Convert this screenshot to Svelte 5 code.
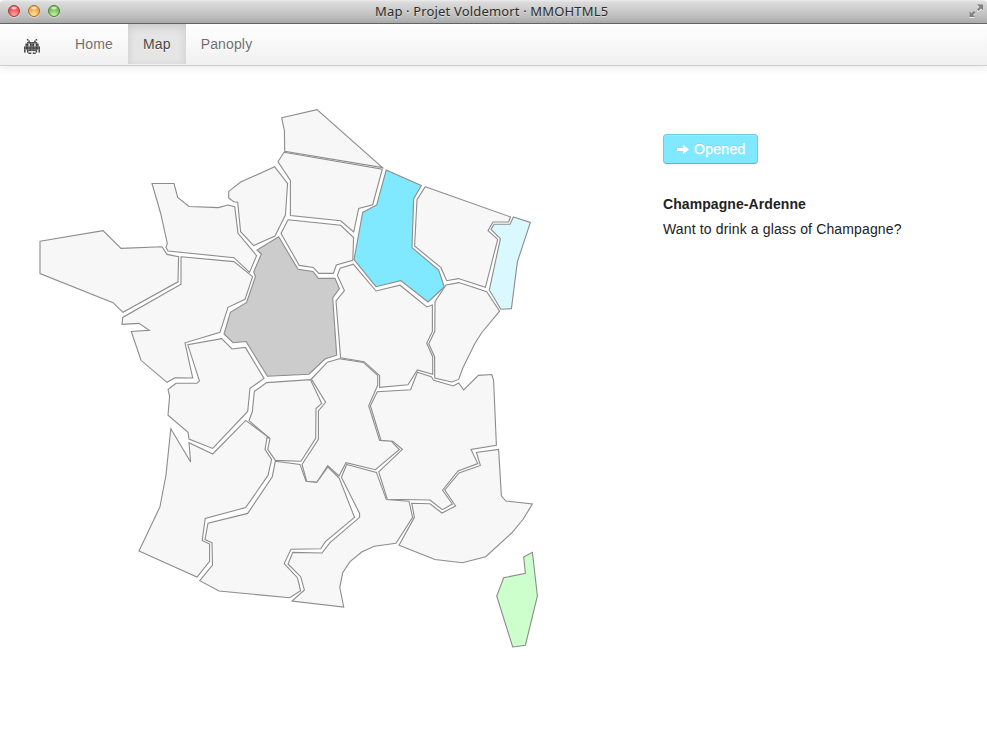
<script>
  const links = ['Home', 'Map', 'Panoply'];
  let active = $state('Map');

  const regions = [
    { name: 'Bretagne', points: '40,241.3 103,230.6 121,248.4 162,246.8 167,254.4 178.6,256.6 178,281.8 123,312.3 113,302.7 40,273.6' },
    { name: 'Basse-Normandie', points: '152,183.5 174,183.5 177.7,197.4 189,206.5 218.3,207.6 228,205 234.7,206.8 238,233.3 256.6,255.7 249.5,272.4 234,257.7 168,251 166,247.5 167.3,243.5 160.7,213.5' },
    { name: 'Pays de la Loire', points: '181,256.8 234,261.6 252.6,276.6 245,299.3 228,307.3 220,332.4 185,342.8 192.7,378 175,377.7 167,382.3 141,360.3 131.3,331.4 149.3,330.3 139,323.4 122,324.4 122.7,317.4 181,284.3' },
    { name: 'Haute-Normandie', points: '274.7,166.8 287.6,183.3 285.4,215 275,236 253.7,245.6 240.6,231.7 237.7,202.2 233.7,201.7 228.7,198 228.7,191.4 240.7,182' },
    { name: 'Nord-Pas-de-Calais', points: '281.7,117.7 317,109.6 382.5,167.6 284.7,151.3 284.4,130.7' },
    { name: 'Picardie', points: '284,152.3 382.3,169.2 372.7,204.7 358.7,208.4 353.7,232 340.7,220.8 290.4,215.6 290.4,180.4 278,161.7' },
    { name: 'Île-de-France', points: '288,219.8 340.7,225.3 353.6,237.6 352.8,260.4 336.4,265 333.3,273.4 318.7,273.4 313.3,267.4 299.3,265.4 281,233.4' },
    { name: 'Champagne-Ardenne', fill: '#80e9ff', points: '386.2,170 421.3,185.4 413.7,198.7 412,247.6 438.7,270 444.3,287 428,302 400.7,280.6 376,286.7 354,259.7 362.7,212.4 376.7,205' },
    { name: 'Lorraine', points: '425.3,186.7 510.6,217 508.6,222 493,222 488,230.7 497.7,239.4 485.4,287.3 458.3,278.6 446.7,280.7 441,267.7 414.6,246 417,199.7' },
    { name: 'Alsace', fill: '#d9f8ff', points: '513.4,217 530.4,222.4 517.4,261.7 511.4,308.7 500.8,309.3 489.3,290 500.4,238.6 491,229.4 494,224.2 510,224.3' },
    { name: 'Centre', fill: '#ccc', points: '278.7,236.7 298,269.3 313,271.4 318.3,278.4 335,278.4 339.4,288.6 332.7,298 336.7,355.2 325,359 309,374.2 267.4,376.3 246,341.5 233,342.7 224,334 230.4,312.4 246.6,302.4 255.4,276.7 253.7,271.7 261.4,254 257,250' },
    { name: 'Bourgogne', points: '353.3,264.2 376,291 400,285.2 426.8,307 432.4,305 432.4,331.4 426.7,343.3 432.7,356.7 432.7,374.2 417.4,370 408,384.7 379.6,387.3 379.6,375.4 364,361.7 340.6,357.7 336,301 344.4,290.6 337.4,275.4 340.2,268.2' },
    { name: 'Franche-Comté', points: '446,285 459,282.6 486.7,291.7 499.6,311.2 481.7,332.7 475,343.3 462.7,368.3 458.7,379.4 451.7,382 434.7,378 434.6,356.7 428.7,343.7 434.8,331.3 435,301.7' },
    { name: 'Poitou-Charentes', points: '221.7,338.7 232,349 245.4,347.4 264,378.4 250,388.3 247.7,411.4 212.7,448.4 189,439 188,432.4 168,415.2 169.6,396.3 168,389.5 176,383.3 197,383.3 199.4,380.8 187.8,344.8' },
    { name: 'Limousin', points: '266.7,382.6 310.4,379.6 321.7,403.4 316,408.5 315.7,438.4 301,461.2 275.4,460.4 267.7,449.3 270,438.7 249,420.7 252.3,411.8 254.3,391.5' },
    { name: 'Auvergne', points: '311.4,379 327.4,362.2 339.4,358.7 363.3,362.4 377.7,375.3 377.7,385.3 368.7,405.7 379.6,440.4 390.7,440.7 399.4,449.5 375.4,469.7 346,462.7 339,476 327.7,465.6 317,482.3 306.7,481.2 302,464.5 318.4,439.4 318.4,411 325.6,402.3' },
    { name: 'Rhône-Alpes', points: '417.4,372.3 431.3,376.7 433.7,380.2 453.3,386 458.7,383 463.7,390 478.4,375.4 491.7,374.5 493.6,380 496.4,445.3 471,449.4 477.8,463.6 458,471 442.6,490.2 452.4,504 442.4,509.7 430,500 387.3,499.2 378.7,471.8 402.4,449.4 392.7,441.3 381,440.4 370.4,405.7 377.3,391.8 410.6,389.7' },
    { name: "Provence-Alpes-Côte d'Azur", points: '498.6,449.4 501.4,496 506,501 532.4,504 523.3,519 511.7,533 485.7,556.7 462.4,562.8 435,559.5 399,545.3 414.4,517.3 411.7,503.2 430,503.8 442,513 455.6,506 444.8,490 459,473 480.4,465.4 476.4,452.4' },
    { name: 'Corse', fill: '#ccffcc', points: '523.7,557 532.4,552.3 537.4,596 525.4,645.2 512.7,647 496.7,596 503.7,577.8 525.4,573.3' },
    { name: 'Languedoc-Roussillon', points: '346.7,464.5 376.4,472.4 386.3,499.6 409,501.2 412.6,517.3 396,543.2 374.3,546.2 361.7,552 350,561.7 342.7,572.7 339.8,587.3 343.7,607 292,601 304.4,590 300.7,576.7 288,564 292.8,552.4 322,553 330,542.7 359.6,517.3 359.6,513.5 341.4,477.3' },
    { name: 'Midi-Pyrénées', points: '275.3,461.3 300,464.4 306,481.3 316.7,482.4 327.9,467 339.3,478.4 354.5,517.3 325.4,541.6 320.7,548.8 291,549.2 284.2,563.6 297.4,577.7 300.6,590.8 289.7,597.8 219,591 199.8,580.7 212.5,565 212,542.8 205,539.6 208,523.2 247.7,513.4 272.3,476.7' },
    { name: 'Aquitaine', points: '170.8,428.7 190.6,462 189,442.7 212.7,454 245.7,420.4 269.7,438.2 267,437.8 265,449.3 271.6,459.4 268,475.4 245.7,507.6 205.2,518.4 202.2,540.4 209.6,544 209.6,561.4 197,577 139,551 160,506.7 166,475' }
  ];

  const invader = [
    '..#.....#..',
    '...#...#...',
    '..#######..',
    '.##.###.##.',
    '.##.###.##.',
    '###########',
    '###########',
    '#.#######.#',
    '#.#.....#.#',
    '...##.##...'
  ];
</script>

<div class="window">
  <header class="titlebar">
    <div class="lights"><i class="red"></i><i class="amber"></i><i class="green"></i></div>
    <div class="title">Map · Projet Voldemort · MMOHTML5</div>
    <svg class="expand" width="15" height="15" viewBox="0 0 15 15">
      <g id="arrows" fill="#f0f0f0" transform="translate(0 1)">
        <path d="M8 .5h6V6.500l-2-2-2.500 2.500-1.500-1.500 2.500-2.500z" />
        <path d="M.5 7.500l2 2 2.500-2.500 1.500 1.500-2.500 2.500 2 2h-5.500z" />
      </g>
      <path d="M8 .5h6V6.500l-2-2-2.500 2.500-1.500-1.500 2.500-2.500zM.5 7.500l2 2 2.500-2.500 1.500 1.500-2.500 2.500 2 2h-5.500z" fill="#808080" />
    </svg>
  </header>

  <nav class="navbar">
    <span class="brand">
      <svg width="16" height="15" viewBox="0 0 11 10" preserveAspectRatio="none">
        {#each invader as row, y}
          {#each row as cell, x}
            {#if cell === '#'}<rect {x} {y} width="1.04" height="1.04" fill="#444" />{/if}
          {/each}
        {/each}
      </svg>
    </span>
    {#each links as link}
      <button class="link" class:active={active === link} onclick={() => (active = link)}>{link}</button>
    {/each}
  </nav>

  <main>
    <svg class="map" width="580" height="666" viewBox="0 66 580 666">
      {#each regions as region}
        <polygon points={region.points} fill={region.fill ?? '#f7f7f7'} aria-label={region.name} />
      {/each}
    </svg>
    <section class="info">
      <button class="status">
        <svg width="12" height="11" viewBox="0 0 12 11"><path d="M0 3.900h6V.8L12 5.500 6 10.200V7.100H0z" fill="#fff" /></svg>
        <span>Opened</span>
      </button>
      <h1>Champagne-Ardenne</h1>
      <p>Want to drink a glass of Champagne?</p>
    </section>
  </main>
</div>

<style>
  :global(body) { background: #fff; }
  .window {
    width: 987px;
    height: 732px;
    overflow: hidden;
    font: 14px/20px "Liberation Sans", Arial, sans-serif;
    color: #222;
    display: flex;
    flex-direction: column;
  }
  .titlebar {
    box-sizing: border-box;
    height: 24px;
    flex: none;
    display: flex;
    align-items: center;
    justify-content: space-between;
    padding: 0 3px 1px 8px;
    border-bottom: 1px solid #686868;
    border-radius: 4px 4px 0 0;
    background: linear-gradient(#eee, #dcdcdc 2px, #b0b0b0);
  }
  .lights { display: flex; gap: 8px; width: 60px; }
  .lights i {
    box-sizing: border-box;
    width: 12px;
    height: 12px;
    border-radius: 50%;
    border: 1px solid;
    box-shadow: 0 1px 0 rgba(255, 255, 255, .5);
  }
  .lights .red { background: radial-gradient(ellipse 4px 2px at 50% 2px, #fff, transparent), radial-gradient(circle at 50% 90%, #ffa6a6, #ec4f53 65%); border-color: #a13c3d; }
  .lights .amber { background: radial-gradient(ellipse 4px 2px at 50% 2px, #fff, transparent), radial-gradient(circle at 50% 90%, #ffe79b, #eea541 65%); border-color: #a46e2c; }
  .lights .green { background: radial-gradient(ellipse 4px 2px at 50% 2px, #fff, transparent), radial-gradient(circle at 50% 90%, #c8f2a4, #73bb59 65%); border-color: #4a7f38; }
  .title {
    font: 13px/20px "Noto Sans", "Open Sans", sans-serif;
    letter-spacing: .16px;
    white-space: nowrap;
    color: #2c2c2c;
    text-shadow: 0 1px 0 rgba(255, 255, 255, .5);
    margin-left: 307px;
    margin-right: auto;
  }
  .navbar {
    box-sizing: border-box;
    height: 42px;
    flex: none;
    display: flex;
    align-items: stretch;
    padding: 0 0 1px 24px;
    background: linear-gradient(#fff, #f0f0f0);
    border-bottom: 1px solid #d0d0d0;
    box-shadow: 0 1px 10px rgba(0, 0, 0, .1);
  }
  .brand { width: 36px; padding-top: 15px; }
  .brand svg { display: block; }
  .link {
    border: 0;
    margin: 0;
    padding: 0 15px;
    background: none;
    font: 14px/20px "Liberation Sans", Arial, sans-serif;
    letter-spacing: .15px;
    color: #707070;
    text-shadow: 0 1px 0 #fff;
  }
  .link.active {
    color: #484848;
    background: #e5e5e5;
    box-shadow: inset 0 3px 8px rgba(0, 0, 0, .125);
  }
  main { display: flex; flex: 1; min-height: 0; }
  .map { display: block; flex: none; }
  .map polygon { stroke: #8c8c8c; stroke-width: 1.1; }
  .info { padding: 68px 0 0 83px; }
  .status {
    box-sizing: border-box;
    width: 95px;
    height: 30px;
    display: flex;
    align-items: center;
    gap: 5px;
    padding: 0 0 0 13px;
    border: 1px solid #66cfe2;
    border-bottom-color: #58b9cc;
    border-radius: 4px;
    background: #80e9ff;
    box-shadow: inset 0 1px 0 rgba(255, 255, 255, .15), 0 1px 2px rgba(0, 0, 0, .05);
    color: #fff;
    font: 14px/20px "Liberation Sans", Arial, sans-serif;
    letter-spacing: .3px;
    -webkit-text-stroke: .3px #fff;
    text-shadow: 0 -1px 0 rgba(0, 0, 0, .15);
  }
  h1 { font-size: 14px; line-height: 20px; margin: 30px 0 5px; letter-spacing: .08px; }
  p { margin: 0; letter-spacing: .14px; }
</style>
